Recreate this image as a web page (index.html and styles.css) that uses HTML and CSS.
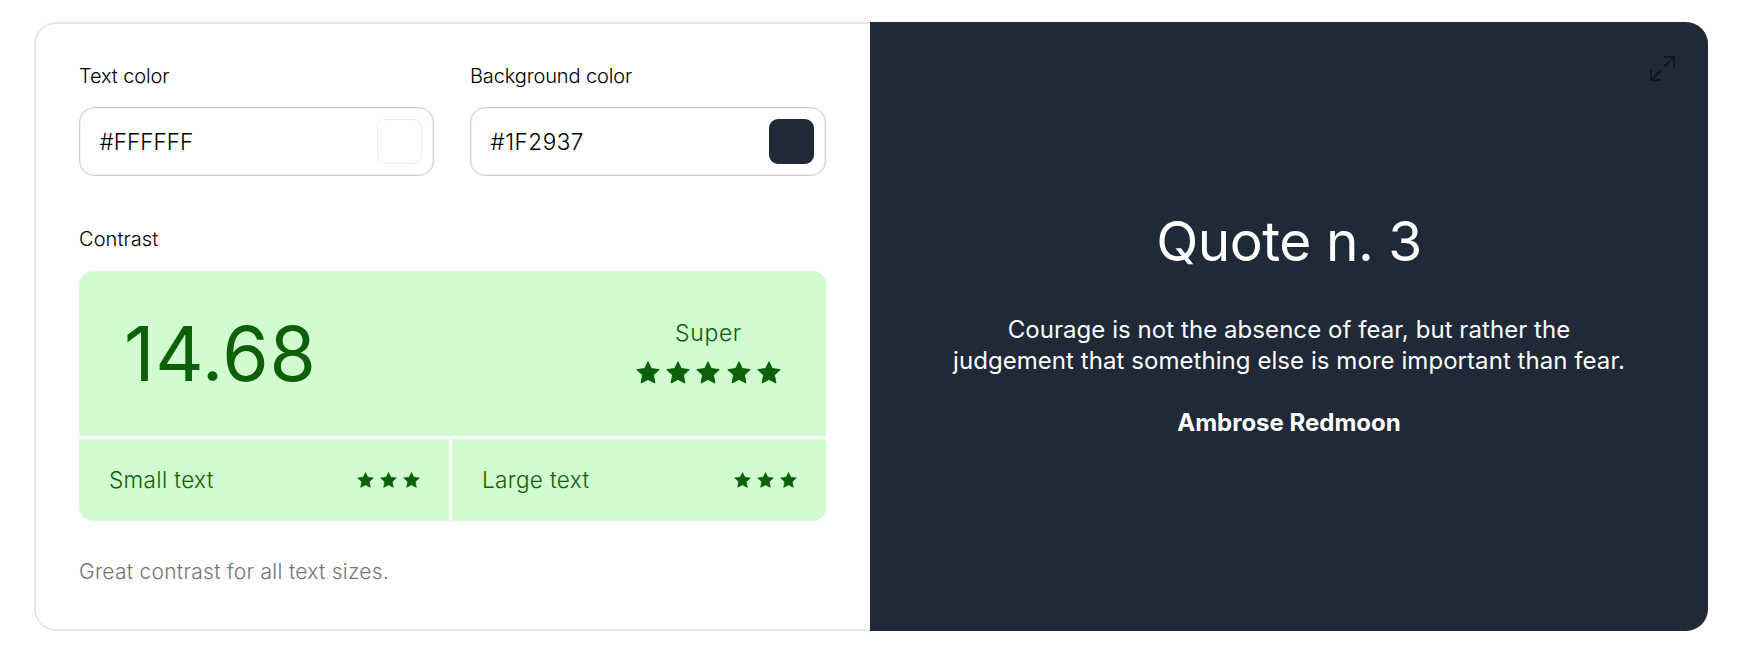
FILE: index.html
```html
<!DOCTYPE html>
<html lang="en">
<head>
<meta charset="utf-8">
<title>Color contrast checker</title>
<link rel="stylesheet" href="styles.css">
</head>
<body>
<svg class="defs" width="0" height="0" aria-hidden="true">
  <symbol id="star" viewBox="0 0 24 23"><path d="M12 .8l3.300 6.800 7.900 1-5.800 5.400 1.500 8-6.900-3.600-6.900 3.600 1.500-8L.8 8.600l7.900-1z" stroke="currentColor" stroke-width="1" stroke-linejoin="round"/></symbol>
</svg>
<main class="card">
  <section class="controls">
    <div class="fields">
      <label class="field">
        <span class="label">Text color</span>
        <span class="input"><span class="value">#FFFFFF</span><span class="swatch swatch-text"></span></span>
      </label>
      <label class="field">
        <span class="label">Background color</span>
        <span class="input"><span class="value value-bg">#1F2937</span><span class="swatch swatch-bg"></span></span>
      </label>
    </div>
    <h2 class="label contrast-label">Contrast</h2>
    <div class="score">
      <div class="score-main">
        <div class="ratio">14.68</div>
        <div class="verdict">
          <span class="verdict-text">Super</span>
          <span class="stars stars-lg"><svg><use href="#star"/></svg><svg><use href="#star"/></svg><svg><use href="#star"/></svg><svg><use href="#star"/></svg><svg><use href="#star"/></svg></span>
        </div>
      </div>
      <div class="score-cell"><span class="size-name">Small text</span><span class="stars"><svg><use href="#star"/></svg><svg><use href="#star"/></svg><svg><use href="#star"/></svg></span></div>
      <div class="score-cell"><span class="size-name">Large text</span><span class="stars"><svg><use href="#star"/></svg><svg><use href="#star"/></svg><svg><use href="#star"/></svg></span></div>
    </div>
    <p class="note">Great contrast for all text sizes.</p>
  </section>
  <section class="preview">
    <svg class="expand" viewBox="0 0 25 25"><path d="M14 1h10v10M24 1L14.500 10.500M11 24H1V14M1 24l9.500-9.500"/></svg>
    <h1 class="quote-title">Quote n. 3</h1>
    <p class="quote">Courage is not the absence of fear, but rather the judgement that something else is more important than fear.</p>
    <p class="author">Ambrose Redmoon</p>
  </section>
</main>
</body>
</html>
```

FILE: styles.css
```css
* { box-sizing: border-box; }
body {
  margin: 0;
  padding: 22px 42px 0 34px;
  background: #fff;
  color: #000;
  font-family: Inter, "Liberation Sans", sans-serif;
  font-weight: 300;
}
h1, h2, p { margin: 0; font-weight: inherit; }
.defs { display: block; position: absolute; }
.card { display: flex; height: 609px; }
.controls {
  width: 836px;
  padding: 37px 43px 0;
  border: 2px solid #e6e6e6;
  border-right: 0;
  border-radius: 22px 0 0 22px;
}
.fields { display: grid; grid-template-columns: 355px 356px; gap: 36px; }
.field { display: block; }
.label { display: block; font-size: 20px; line-height: 30px; letter-spacing: -0.12px; }
.input {
  display: flex;
  align-items: center;
  justify-content: space-between;
  height: 69px;
  margin-top: 16px;
  padding: 0 11px 0 19.5px;
  border: 1px solid #cfcfcf;
  box-shadow: inset 0 0 0 1px #f0f0f0;
  border-radius: 15px;
}
.value { font-size: 22.5px; }
.value-bg { letter-spacing: 0.5px; }
.swatch { width: 45px; height: 45px; border-radius: 9px; }
.swatch-text { background: #fff; border: 1px solid #ececec; }
.swatch-bg { background: #1f2937; }
.contrast-label { margin-top: 48px; letter-spacing: 0.08px; }
.score {
  display: grid;
  grid-template-columns: 370px 374px;
  grid-template-rows: 165px 82px;
  gap: 3px;
  margin-top: 17px;
  border-radius: 15px;
  overflow: hidden;
  color: #0b6008;
  font-size: 22.5px;
}
.score-main {
  grid-column: span 2;
  display: flex;
  align-items: center;
  justify-content: space-between;
  padding: 0 45px;
  background: #d1fbd0;
}
.ratio { font-size: 75px; font-weight: 400; line-height: 90px; letter-spacing: 0.7px; }
.verdict {
  display: flex;
  flex-direction: column;
  align-items: center;
  gap: 14px;
  padding-bottom: 4px;
  line-height: 28px;
}
.verdict-text { font-size: 23px; letter-spacing: 0.65px; }
.stars { display: flex; gap: 6px; }
.stars svg { display: block; width: 17px; height: 16px; fill: currentColor; }
.stars-lg { gap: 6.3px; }
.stars-lg svg { width: 24px; height: 23px; }
.score-cell {
  display: flex;
  align-items: center;
  justify-content: space-between;
  padding: 0 29px 0 30px;
  background: #d1fbd0;
}
.size-name { padding-bottom: 2px; letter-spacing: 0.37px; }
.note { margin-top: 36px; font-size: 21px; line-height: 30px; letter-spacing: 0.27px; color: #757575; }
.preview {
  position: relative;
  flex: 1;
  display: flex;
  flex-direction: column;
  align-items: center;
  padding-top: 185px;
  background: #1f2937;
  border-radius: 0 22px 22px 0;
  color: #fff;
  font-size: 24px;
  font-weight: 400;
  line-height: 31px;
  text-align: center;
}
.expand {
  position: absolute;
  top: 34px;
  right: 33px;
  width: 25px;
  height: 25px;
  fill: none;
  stroke: #11171f;
  stroke-width: 2;
}
.quote-title { font-size: 55px; line-height: 68px; letter-spacing: -0.48px; }
.quote { width: 685px; margin-top: 39px; letter-spacing: 0.06px; }
.author { margin-top: 31px; font-weight: 700; }
```
